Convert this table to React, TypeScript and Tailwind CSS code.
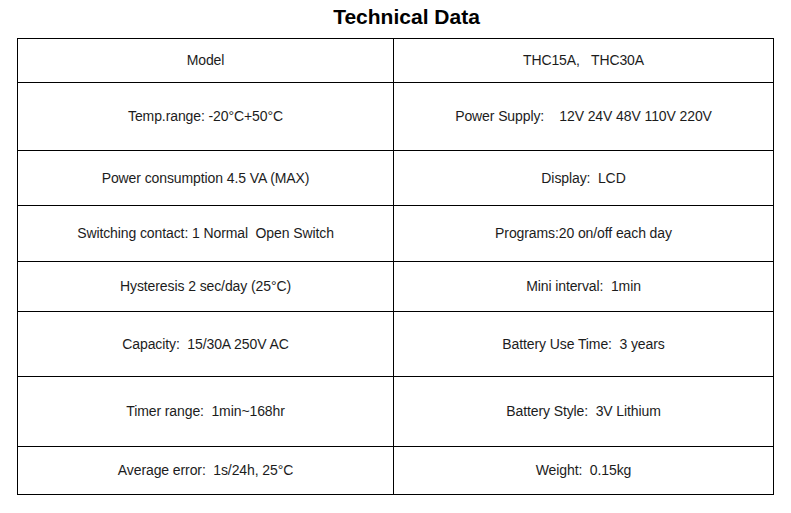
import React from "react";

const rows: { h: string; left: string; right: string }[] = [
  { h: "h-[44px]", left: "Model", right: "THC15A,   THC30A" },
  { h: "h-[68px]", left: "Temp.range: -20°C+50°C", right: "Power Supply:    12V 24V 48V 110V 220V" },
  { h: "h-[55px]", left: "Power consumption 4.5 VA (MAX)", right: "Display:  LCD" },
  { h: "h-[56px]", left: "Switching contact: 1 Normal  Open Switch", right: "Programs:20 on/off each day" },
  { h: "h-[50px]", left: "Hysteresis 2 sec/day (25°C)", right: "Mini interval:  1min" },
  { h: "h-[65px]", left: "Capacity:  15/30A 250V AC", right: "Battery Use Time:  3 years" },
  { h: "h-[70px]", left: "Timer range:  1min~168hr", right: "Battery Style:  3V Lithium" },
  { h: "h-[48px]", left: "Average error:  1s/24h, 25°C", right: "Weight:  0.15kg" },
];

export default function App() {
  return (
    <div
      className="w-[791px] h-[513px] bg-white text-[#1c1c1c]"
      style={{ fontFamily: '"Liberation Sans", Arial, sans-serif' }}
    >
      <div className="h-[38px] flex items-center justify-center pl-[22px] pb-[5px]">
        <h1 className="text-[21px] font-bold text-black leading-none">Technical Data</h1>
      </div>
      <div className="ml-[17px] w-[757px] border-l border-t border-black">
        {rows.map((r, i) => (
          <div key={i} className={`grid grid-cols-[376px_380px] ${r.h}`}>
            <div className="flex items-center justify-center border-r border-b border-black text-[14px] tracking-[-0.1px] whitespace-pre">
              {r.left}
            </div>
            <div className="flex items-center justify-center border-r border-b border-black text-[14px] tracking-[-0.1px] whitespace-pre">
              {r.right}
            </div>
          </div>
        ))}
      </div>
    </div>
  );
}
